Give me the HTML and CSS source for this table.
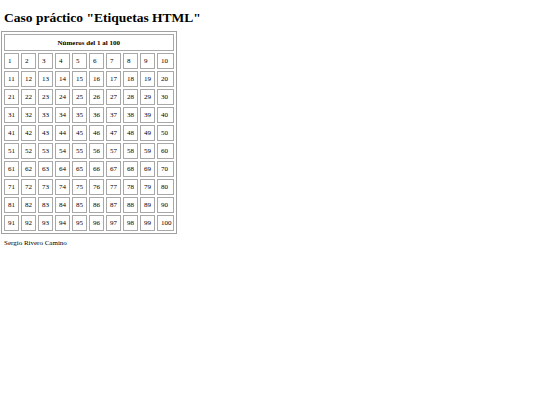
FILE: index.html
```html
<!DOCTYPE html>
<html lang="es">
<head>
<meta charset="utf-8">
<title>Caso práctico</title>
<link rel="stylesheet" href="styles.css">
</head>
<body>
<h1 class="title">Caso práctico "Etiquetas HTML"</h1>
<table class="grid">
<tr><th colspan="10" class="head">Números del 1 al 100</th></tr>
<tr><td>1</td><td>2</td><td>3</td><td>4</td><td>5</td><td>6</td><td>7</td><td>8</td><td>9</td><td>10</td></tr>
<tr><td>11</td><td>12</td><td>13</td><td>14</td><td>15</td><td>16</td><td>17</td><td>18</td><td>19</td><td>20</td></tr>
<tr><td>21</td><td>22</td><td>23</td><td>24</td><td>25</td><td>26</td><td>27</td><td>28</td><td>29</td><td>30</td></tr>
<tr><td>31</td><td>32</td><td>33</td><td>34</td><td>35</td><td>36</td><td>37</td><td>38</td><td>39</td><td>40</td></tr>
<tr><td>41</td><td>42</td><td>43</td><td>44</td><td>45</td><td>46</td><td>47</td><td>48</td><td>49</td><td>50</td></tr>
<tr><td>51</td><td>52</td><td>53</td><td>54</td><td>55</td><td>56</td><td>57</td><td>58</td><td>59</td><td>60</td></tr>
<tr><td>61</td><td>62</td><td>63</td><td>64</td><td>65</td><td>66</td><td>67</td><td>68</td><td>69</td><td>70</td></tr>
<tr><td>71</td><td>72</td><td>73</td><td>74</td><td>75</td><td>76</td><td>77</td><td>78</td><td>79</td><td>80</td></tr>
<tr><td>81</td><td>82</td><td>83</td><td>84</td><td>85</td><td>86</td><td>87</td><td>88</td><td>89</td><td>90</td></tr>
<tr><td>91</td><td>92</td><td>93</td><td>94</td><td>95</td><td>96</td><td>97</td><td>98</td><td>99</td><td>100</td></tr>
</table>
<p class="author">Sergio Rivero Camino</p>
</body>
</html>
```
FILE: styles.css
```css
html, body {
  margin: 0;
  padding: 0;
  background: #fff;
}
body {
  padding: 4px;
  font-family: "Liberation Serif", "Times New Roman", serif;
  color: #000;
}
.title {
  font-size: 13.5px;
  font-weight: bold;
  margin: 6px 0 5px 0;
  line-height: 16px;
}
.grid {
  border: 1px solid #a0a0a0;
  border-spacing: 2px;
  font-size: 7px;
  margin-left: -3px;
}
.grid td, .grid th {
  border: 1px solid #a8a8a8;
  padding: 3px 1px 3px 3px;
  line-height: 8px;
  text-align: left;
}
.grid td {
  width: 9px;
}
.grid .head {
  text-align: center;
  font-weight: bold;
  padding: 4px 2px 3px 2px;
}
.author {
  font-size: 7px;
  margin: 5px 0 0 0;
  line-height: 9px;
}
```
